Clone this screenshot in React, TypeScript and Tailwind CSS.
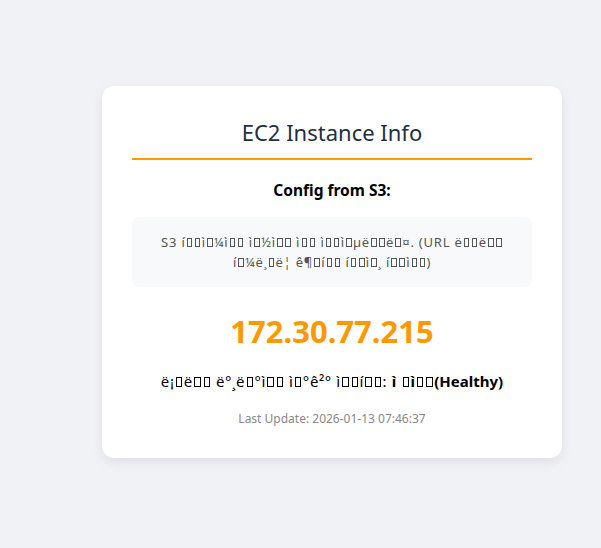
import { Fragment } from "react";

const fontStack = '"Noto Sans", "Open Sans", "Liberation Sans", sans-serif';

// UTF-8 bytes read back as Latin-1, the way the page shows its Korean text
const mojibake = (s: string) =>
  Array.from(new TextEncoder().encode(s), (b) => String.fromCharCode(b)).join("");

// C1 control characters have no glyph here, so draw the missing-glyph box around them
function Garbled({ text, className = "tracking-[0.04em]" }: { text: string; className?: string }) {
  const words = mojibake(text).split(" ");
  return (
    <span className={className}>
      {words.map((word, w) => (
        <Fragment key={w}>
          {w > 0 && " "}
          <span className="whitespace-nowrap">
            {Array.from(word).map((ch, i) => {
              const code = ch.charCodeAt(0);
              if (code >= 0x80 && code <= 0x9f) {
                return (
                  <span
                    key={i}
                    className="mx-[0.1em] inline-block h-[0.7em] w-[0.42em] overflow-hidden border border-current"
                  >
                    <span className="opacity-0">{ch}</span>
                  </span>
                );
              }
              return <Fragment key={i}>{ch}</Fragment>;
            })}
          </span>
        </Fragment>
      ))}
    </span>
  );
}

export default function App() {
  return (
    <div className="min-h-[548px] bg-[#f0f2f5] pt-[86px] pl-[102px]" style={{ fontFamily: fontStack }}>
      <div className="w-[460px] rounded-xl bg-white p-[30px] text-center shadow-[0_4px_12px_rgba(0,0,0,0.08)]">
        <h2 className="border-b-2 border-[#ff9900] pb-[10px] text-[22px] leading-[32px] font-normal text-[#232f3e]">
          EC2 Instance Info
        </h2>

        <p className="mt-[19px] text-[15.5px] leading-[22px] font-bold text-black">Config from S3:</p>

        <div className="mt-[16px] rounded-lg bg-[#f8f9fa] px-[15px] py-[15px] text-[13px] leading-[20px] text-[#555]">
          <Garbled
            className="tracking-[0.06em]"
            text="S3 파일을 읽을 수 없습니다. (URL 또는 퍼블릭 권한 확인 필요)"
          />
        </div>

        <div className="mt-[24px] text-[31px] leading-[40px] font-bold text-[#ff9900]">172.30.77.215</div>

        <p className="mt-[19px] text-[15px] leading-[22px] text-black">
          <Garbled text="로드 밸런서 연결 상태: " />
          <strong>
            <Garbled text="정상" />
            (Healthy)
          </strong>
        </p>

        <p className="mt-[18px] text-[12px] leading-[18px] text-[#888]">Last Update: 2026-01-13 07:46:37</p>
      </div>
    </div>
  );
}
